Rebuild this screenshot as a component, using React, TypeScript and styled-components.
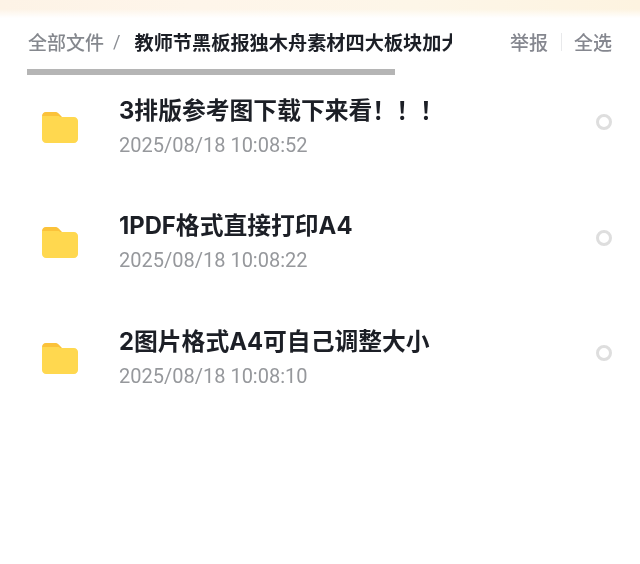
import React from "react";
import styled, { createGlobalStyle } from "styled-components";

const Global = createGlobalStyle`
  html, body { margin: 0; padding: 0; background: #fff; }
  body { font-family: "Roboto", "Noto Sans CJK SC", sans-serif; }
`;

const Page = styled.div`
  width: 640px;
  height: 564px;
  overflow: hidden;
  background: #fff;
  filter: blur(0.35px);
`;

const Banner = styled.div`
  height: 18px;
  background:
    linear-gradient(180deg, rgba(255, 255, 255, 0) 50%, #fff 100%),
    linear-gradient(90deg, #fdf3e6 0%, #fef5ea 30%, #fdf6e8 65%, #fdf3e0 100%);
`;

const Header = styled.div`
  display: flex;
  align-items: center;
  height: 51px;
  padding: 0 28px 4px;
  box-sizing: border-box;
`;

const Crumbs = styled.div`
  display: flex;
  align-items: center;
  width: 424px;
  overflow: hidden;
  white-space: nowrap;
`;

const Root = styled.span`
  font-size: 19px;
  font-weight: 500;
  color: #85888e;
`;

const Slash = styled.span`
  font-size: 18px;
  color: #8a8d93;
  margin: 0 14px 0 9px;
`;

const Current = styled.span`
  font-size: 19.2px;
  font-weight: 700;
  color: #1c1f26;
`;

const Actions = styled.div`
  display: flex;
  align-items: center;
  margin-left: auto;
`;

const Action = styled.span`
  font-size: 19px;
  font-weight: 500;
  color: #85878f;
`;

const Divider = styled.span`
  width: 1px;
  height: 18px;
  background: #e8e9eb;
  margin: 0 12px 0 13px;
`;

const ScrollTrack = styled.div`
  width: 368px;
  height: 6px;
  margin-left: 27px;
  background: #b5b5b5;
`;

const List = styled.div`
  display: flex;
  flex-direction: column;
`;

const Row = styled.div`
  display: flex;
  align-items: center;
  height: 115.5px;
  padding: 0 28px 11.5px 42px;
  box-sizing: border-box;
`;

const FolderIcon = styled.svg`
  width: 36px;
  height: 31px;
  flex: none;
  margin-right: 41px;
`;

const Info = styled.div`
  flex: 1;
  min-width: 0;
  margin-bottom: 2px;
`;

const Name = styled.div`
  font-family: "Inter", "Noto Sans CJK SC", sans-serif;
  font-size: 23.8px;
  line-height: 32px;
  font-weight: 700;
  color: #1c1f26;
`;

const Time = styled.div`
  font-size: 20px;
  line-height: 26px;
  margin-top: 5px;
  color: #96989c;
`;

const Radio = styled.span`
  width: 16px;
  height: 16px;
  margin-bottom: 10px;
  box-sizing: border-box;
  border: 3px solid #dedede;
  border-radius: 50%;
  flex: none;
`;

const Folder = () => (
  <FolderIcon viewBox="0 0 36 31">
    <path d="M0 4C0 1.8 1.6 0 3.8 0h9.4c1.5 0 2.7.6 3.7 1.7L20 5H0z" fill="#fbc23a" />
    <path d="M0 5h32c2.2 0 4 1.8 4 4v18c0 2.2-1.8 4-4 4H4c-2.2 0-4-1.8-4-4z" fill="#ffd84f" />
    <path d="M0 4h17l3 3H0z" fill="#ffd84f" />
  </FolderIcon>
);

const files = [
  { name: "3排版参考图下载下来看！！！", time: "2025/08/18 10:08:52" },
  { name: "1PDF格式直接打印A4", time: "2025/08/18 10:08:22" },
  { name: "2图片格式A4可自己调整大小", time: "2025/08/18 10:08:10" },
];

export default function App() {
  return (
    <Page>
      <Global />
      <Banner />
      <Header>
        <Crumbs>
          <Root>全部文件</Root>
          <Slash>/</Slash>
          <Current>教师节黑板报独木舟素材四大板块加大小学</Current>
        </Crumbs>
        <Actions>
          <Action>举报</Action>
          <Divider />
          <Action>全选</Action>
        </Actions>
      </Header>
      <ScrollTrack />
      <List>
        {files.map((f) => (
          <Row key={f.name}>
            <Folder />
            <Info>
              <Name>{f.name}</Name>
              <Time>{f.time}</Time>
            </Info>
            <Radio />
          </Row>
        ))}
      </List>
    </Page>
  );
}
